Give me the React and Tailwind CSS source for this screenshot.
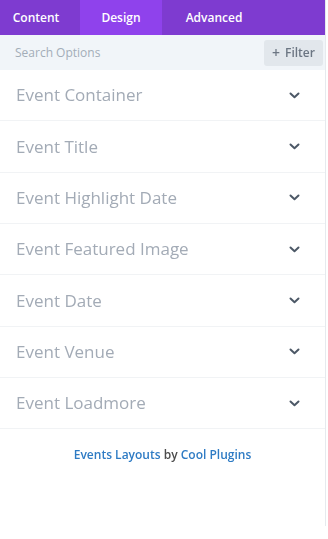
import { useState } from 'react';

const TABS = ['Content', 'Design', 'Advanced'];

const GROUPS = [
  'Event Container',
  'Event Title',
  'Event Highlight Date',
  'Event Featured Image',
  'Event Date',
  'Event Venue',
  'Event Loadmore',
];

function Chevron() {
  return (
    <svg width="11" height="7" viewBox="0 0 11 7" fill="none" className="text-[#4c5866]">
      <path d="M1.5 1.5 5.5 5.2 9.5 1.5" stroke="currentColor" strokeWidth="2" strokeLinecap="round" strokeLinejoin="round" />
    </svg>
  );
}

export default function App() {
  const [active, setActive] = useState('Design');

  return (
    <div className="min-h-[539px] bg-white" style={{ fontFamily: '"Open Sans", "Liberation Sans", sans-serif' }}>
      <div className="flex h-[526px] w-[326px] flex-col border-r border-[#e6eaee] bg-white">
        <nav className="flex h-[35px] bg-[#7e3bd0] text-[12px] font-semibold text-white">
          {TABS.map((tab) => (
            <button
              key={tab}
              type="button"
              onClick={() => setActive(tab)}
              className={`h-full ${tab === 'Design' ? 'w-[82px]' : tab === 'Content' ? 'w-[80px] pr-[8px]' : 'w-[100px] pl-[4px]'} ${
                active === tab ? 'bg-[#8f42ec]' : ''
              }`}
            >
              {tab}
            </button>
          ))}
        </nav>

        <div className="flex h-[35px] items-center bg-[#f1f5f9] pl-[15px] pr-[2px]">
          <input
            placeholder="Search Options"
            className="h-full flex-1 bg-transparent text-[12px] text-[#4c5866] caret-[#333] outline-none placeholder:text-[#a3adb8]"
            autoFocus
          />
          <button
            type="button"
            className="flex h-[26px] w-[59px] items-center justify-center gap-[5px] rounded-[3px] bg-[#e2e7ec] text-[12px] font-semibold text-[#6c7683]"
          >
            <span className="text-[14px] leading-none">+</span>
            Filter
          </button>
        </div>

        <ul>
          {GROUPS.map((g) => (
            <li
              key={g}
              className="flex h-[51.33px] items-center justify-between border-b border-[#f1f3f5] pl-[16px] pr-[25px]"
            >
              <span className="text-[17px] text-[#a3abb6]">{g}</span>
              <Chevron />
            </li>
          ))}
        </ul>

        <p className="mt-[17px] text-center text-[12px] font-semibold text-[#4c4c4c]">
          <span className="text-[#2e7bc4]">Events Layouts</span> by{' '}
          <span className="text-[#2e7bc4]">Cool Plugins</span>
        </p>
      </div>
    </div>
  );
}
